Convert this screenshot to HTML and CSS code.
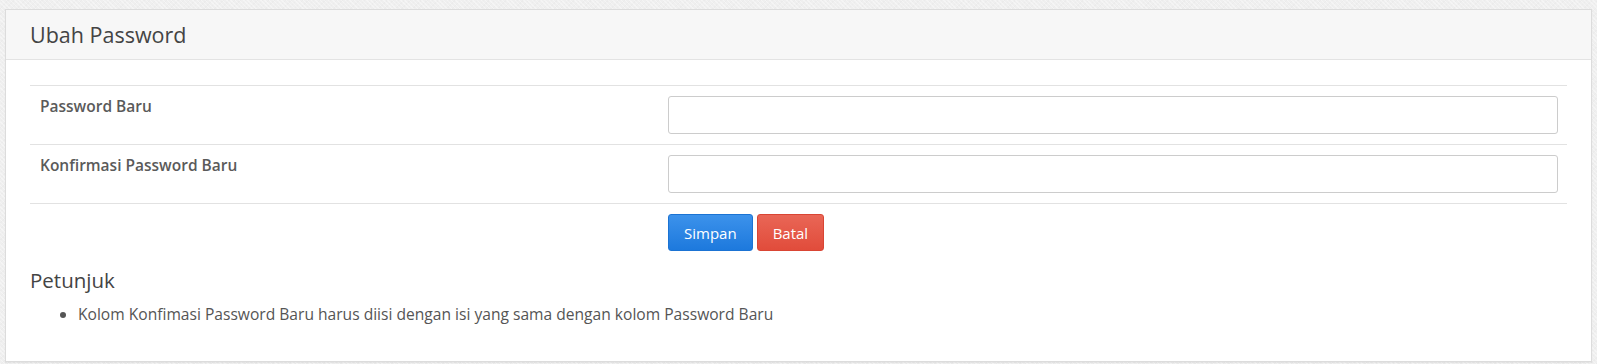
FILE: index.html
```html
<!DOCTYPE html>
<html lang="id">
<head>
  <meta charset="UTF-8">
  <title>Ubah Password</title>
  <meta name="viewport" content="width=device-width, initial-scale=1.0">
  <link rel="stylesheet" href="styles.css">
</head>
<body>
  <div class="panel">
    <div class="panel-heading">
      <h3>Ubah Password</h3>
    </div>

    <div class="panel-body">
      <form class="form-table">
        <div class="row">
          <label class="label" for="pass">Password Baru</label>
          <div class="field"><input type="password" id="pass"></div>
        </div>
        <div class="row">
          <label class="label" for="pass2">Konfirmasi Password Baru</label>
          <div class="field"><input type="password" id="pass2"></div>
        </div>
        <div class="row actions">
          <div class="label"></div>
          <div class="field">
            <button type="submit" class="btn btn-save">Simpan</button>
            <button type="button" class="btn btn-cancel">Batal</button>
          </div>
        </div>
      </form>

      <h4 class="hint-title">Petunjuk</h4>
      <ul class="hint-list">
        <li>Kolom Konfimasi Password Baru harus diisi dengan isi yang sama dengan kolom Password Baru</li>
      </ul>
    </div>
  </div>
</body>
</html>
```

FILE: styles.css
```css
/* Basic Reset */
* {
  box-sizing: border-box;
  margin: 0;
  padding: 0;
}

body {
  font-family: "Open Sans", "Noto Sans", sans-serif;
  font-size: 15px;
  color: #555;
  background-color: #efefef;
  background-image:
    repeating-linear-gradient(45deg, rgba(255,255,255,0.35) 0 1px, transparent 1px 3px),
    repeating-linear-gradient(-45deg, rgba(0,0,0,0.015) 0 1px, transparent 1px 4px);
  padding: 9px 5px 0 5px;
  min-height: 100vh;
}

.panel {
  background: #fff;
  border: 1px solid #dcdcdc;
  box-shadow: 0 1px 1px rgba(0,0,0,0.05);
}

.panel-heading {
  height: 50px;
  background: #f7f7f7;
  border-bottom: 1px solid #e3e3e3;
  padding: 0 24px;
  display: flex;
  align-items: center;
}

.panel-heading h3 {
  font-size: 21.5px;
  font-weight: 400;
  color: #444;
}

.panel-body {
  padding: 25px 24px 36px 24px;
}

/* form laid out like a table */
.row {
  display: grid;
  grid-template-columns: 628px 1fr;
  border-top: 1px solid #e2e2e2;
}

.label {
  padding: 10px 10px;
  font-size: 15.5px;
  font-weight: 600;
  color: #5a5a5a;
  line-height: 21px;
}

.field {
  padding: 10px 9px 10px 10px;
}

input[type="password"] {
  display: block;
  width: 100%;
  height: 38px;
  border: 1px solid #ccc;
  border-radius: 3px;
  background: #fff;
  font-family: inherit;
  font-size: 15px;
  padding: 6px 12px;
}

.actions .field {
  display: flex;
  gap: 4px;
}

.btn {
  height: 37px;
  padding: 0 15px;
  font-family: inherit;
  font-size: 15px;
  color: #fff;
  border-radius: 3px;
  cursor: pointer;
}

.btn-save {
  background: linear-gradient(#3c92eb, #1d79dd);
  border: 1px solid #1b73d3;
}

.btn-cancel {
  background: linear-gradient(#e96656, #e14c3b);
  border: 1px solid #d94534;
}

.hint-title {
  margin-top: 6px;
  font-size: 20.5px;
  font-weight: 400;
  color: #444;
  line-height: 26px;
}

.hint-list {
  margin-top: 10px;
  padding-left: 48px;
  font-size: 15.6px;
  line-height: 22px;
  color: #555;
}
```
